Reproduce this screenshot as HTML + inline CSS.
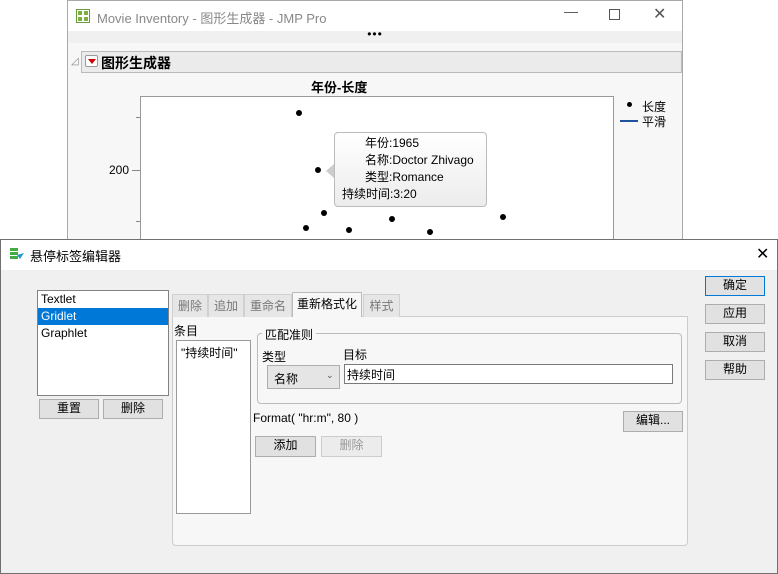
<!DOCTYPE html><html><head><style>
*{box-sizing:border-box;margin:0;padding:0}
body{width:778px;height:574px;background:#fff;position:relative;overflow:hidden;font-family:"Liberation Sans","Noto Sans CJK SC",sans-serif;font-size:12px;color:#000}
.a{position:absolute}
.btn{position:absolute;background:#e1e1e1;border:1px solid #adadad;text-align:center;line-height:17px;font-size:12px}
.dot{position:absolute;width:6px;height:6px;border-radius:3px;background:#000}
.tab{position:absolute;top:294px;height:23px;border:1px solid #d0d0d0;border-bottom:none;background:#e6e6e6;color:#777;line-height:22px;text-align:center;font-size:12px}
</style></head><body>
<div class="a" style="left:67px;top:0;width:616px;height:240px;border:1px solid #aaa;background:#fff">
 <div class="a" style="left:0;top:0;width:614px;height:30px;background:#fff"></div>
 <svg class="a" style="left:8px;top:8px" width="14" height="14"><rect x=".5" y=".5" width="13" height="13" fill="none" stroke="#6a9a3a"/><rect x="2" y="2" width="4" height="4" fill="#7ab040"/><rect x="8" y="2" width="4" height="4" fill="#7ab040"/><rect x="2" y="8" width="4" height="4" fill="#7ab040"/><rect x="8" y="8" width="4" height="4" fill="#7ab040"/></svg>
 <div class="a" style="left:29px;top:7px;font-size:13px;color:#888">Movie Inventory - 图形生成器 - JMP Pro</div>
 <div class="a" style="left:496px;top:2px;font-size:14px;color:#555">—</div>
 <div class="a" style="left:541px;top:8px;width:11px;height:11px;border:1px solid #555"></div>
 <div class="a" style="left:585px;top:3px;font-size:16px;color:#555">✕</div>
 <div class="a" style="left:0;top:30px;width:614px;height:12px;background:#f0f0f0;text-align:center;line-height:6px;font-size:12px;letter-spacing:1px">•••</div>
 <div class="a" style="left:0;top:42px;width:614px;height:198px;background:#f7f7f7"></div>
 <div class="a" style="left:3px;top:55px;color:#888;font-size:10px">◿</div>
 <div class="a" style="left:13px;top:50px;width:601px;height:22px;background:#ebebeb;border:1px solid #bbb"></div>
 <div class="a" style="left:17px;top:54px;width:13px;height:12px;border:1px solid #999;border-radius:2px;background:#fff"><div class="a" style="left:2px;top:3px;border-left:4px solid transparent;border-right:4px solid transparent;border-top:5px solid #c00"></div></div>
 <div class="a" style="left:33px;top:52px;font-size:14px;font-weight:bold">图形生成器</div>
 <div class="a" style="left:243px;top:76px;font-size:13px;font-weight:bold">年份-长度</div>
 <div class="a" style="left:72px;top:95px;width:474px;height:150px;border:1px solid #999;background:#fff"></div>
 <div class="a" style="left:41px;top:162px;font-size:12px">200</div>
 <div class="a" style="left:64px;top:169px;width:8px;border-top:1px solid #888"></div>
 <div class="a" style="left:68px;top:116px;width:4px;border-top:1px solid #888"></div>
 <div class="a" style="left:68px;top:220px;width:4px;border-top:1px solid #888"></div>
 <div class="dot" style="left:228px;top:109px"></div><div class="dot" style="left:247px;top:166px"></div>
 <div class="dot" style="left:253px;top:209px"></div><div class="dot" style="left:235px;top:224px"></div>
 <div class="dot" style="left:278px;top:226px"></div><div class="dot" style="left:321px;top:215px"></div>
 <div class="dot" style="left:359px;top:228px"></div><div class="dot" style="left:432px;top:213px"></div>
 <div class="a" style="left:258px;top:163px;border-top:7px solid transparent;border-bottom:7px solid transparent;border-right:8px solid #ccc"></div>
 <div class="a" style="left:266px;top:131px;width:153px;height:75px;border:1px solid #bbb;border-radius:4px;background:linear-gradient(#fff,#ececec);font-size:12px;line-height:17px;padding-top:2px">
  <div style="padding-left:30px">年份:1965<br>名称:Doctor Zhivago<br>类型:Romance</div><div style="padding-left:7px">持续时间:3:20</div></div>
 <div class="dot" style="left:559px;top:101px;width:5px;height:5px"></div>
 <div class="a" style="left:574px;top:97px;font-size:12px">长度</div>
 <div class="a" style="left:552px;top:119px;width:18px;border-top:2px solid #2050a0"></div>
 <div class="a" style="left:574px;top:112px;font-size:12px">平滑</div>
</div>
<div class="a" style="left:0;top:239px;width:778px;height:335px;border:1px solid #707070;background:#f0f0f0">
 <div class="a" style="left:0;top:0;width:776px;height:30px;background:#fff"></div>
 <svg class="a" style="left:8px;top:7px" width="16" height="14"><rect x="1" y="1" width="8" height="3" fill="#4a4"/><rect x="1" y="5" width="8" height="3" fill="#4a4"/><rect x="1" y="9" width="8" height="3" fill="#4a4"/><path d="M8 8 L15 6 L11 12Z" fill="#29c"/></svg>
 <div class="a" style="left:29px;top:6px;font-size:13px">悬停标签编辑器</div>
 <div class="a" style="left:755px;top:4px;font-size:16px">✕</div>
</div>
<div class="a" style="left:37px;top:290px;width:132px;height:106px;border:1px solid #828282;background:#fff;font-size:12px;line-height:17px">
 <div style="padding-left:3px">Textlet</div><div style="padding-left:3px;background:#0078d7;color:#fff">Gridlet</div><div style="padding-left:3px">Graphlet</div></div>
<div class="btn" style="left:39px;top:399px;width:60px;height:20px">重置</div>
<div class="btn" style="left:103px;top:399px;width:60px;height:20px">删除</div>
<div class="a" style="left:172px;top:316px;width:516px;height:230px;border:1px solid #ccc;background:#f7f7f7;border-radius:0 0 4px 4px"></div>
<div class="tab" style="left:172px;width:36px">删除</div>
<div class="tab" style="left:208px;width:36px">追加</div>
<div class="tab" style="left:244px;width:48px">重命名</div>
<div class="tab" style="left:292px;width:70px;top:292px;height:25px;background:#f7f7f7;color:#000;border-color:#bbb">重新格式化</div>
<div class="tab" style="left:363px;width:37px">样式</div>
<div class="a" style="left:174px;top:322px">条目</div>
<div class="a" style="left:176px;top:340px;width:75px;height:174px;border:1px solid #999;background:#fff;padding:3px 4px">"持续时间"</div>
<div class="a" style="left:257px;top:333px;width:425px;height:71px;border:1px solid #bbb;border-radius:4px"></div>
<div class="a" style="left:262px;top:326px;background:#f7f7f7;padding:0 3px">匹配准则</div>
<div class="a" style="left:262px;top:348px">类型</div>
<div class="a" style="left:343px;top:346px">目标</div>
<div class="a" style="left:267px;top:365px;width:73px;height:24px;border:1px solid #adadad;background:#e5e5e5;padding:4px 6px">名称<span style="position:absolute;left:58px;top:4px;font-size:9px;color:#555">⌄</span></div>
<div class="a" style="left:344px;top:364px;width:329px;height:20px;border:1px solid #7a7a7a;background:#fff;padding:1px 2px">持续时间</div>
<div class="a" style="left:253px;top:411px">Format( "hr:m", 80 )</div>
<div class="btn" style="left:623px;top:411px;width:60px;height:21px">编辑...</div>
<div class="btn" style="left:255px;top:436px;width:61px;height:21px">添加</div>
<div class="btn" style="left:321px;top:436px;width:61px;height:21px;background:#ececec;border-color:#ccc;color:#999">删除</div>
<div class="btn" style="left:705px;top:276px;width:60px;height:20px;border-color:#0078d7">确定</div>
<div class="btn" style="left:705px;top:304px;width:60px;height:20px">应用</div>
<div class="btn" style="left:705px;top:332px;width:60px;height:20px">取消</div>
<div class="btn" style="left:705px;top:360px;width:60px;height:20px">帮助</div>
</body></html>
